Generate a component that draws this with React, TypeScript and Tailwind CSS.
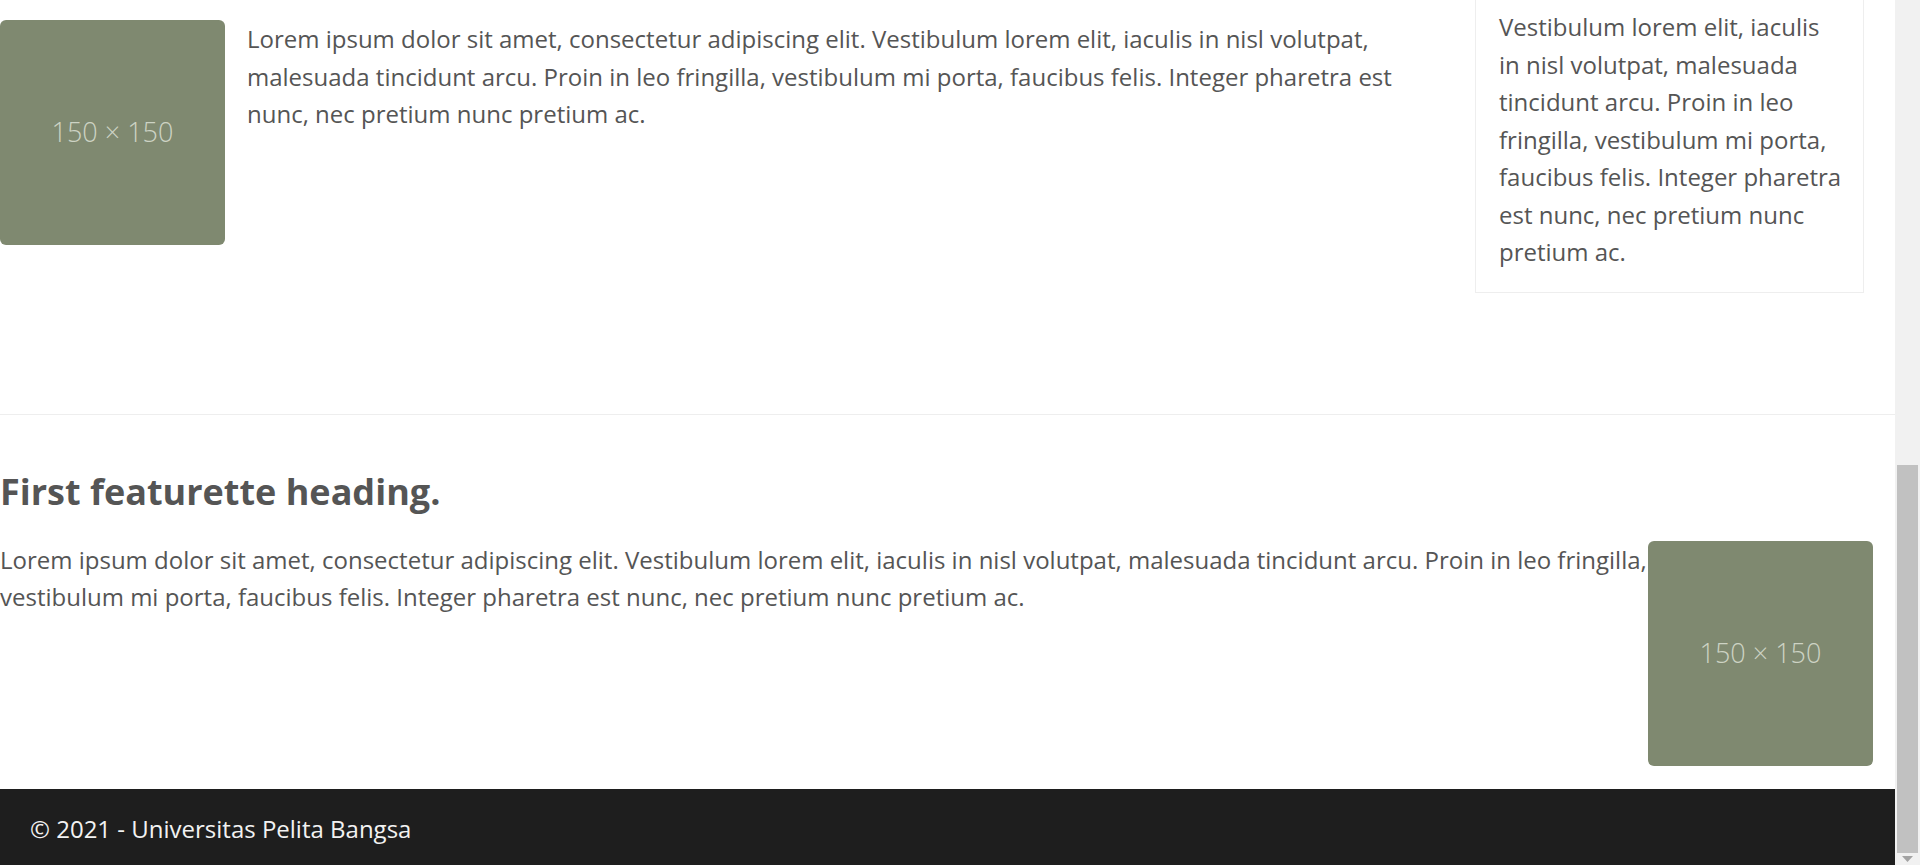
import React from "react";

const LOREM =
  "Lorem ipsum dolor sit amet, consectetur adipiscing elit. Vestibulum lorem elit, iaculis in nisl volutpat, malesuada tincidunt arcu. Proin in leo fringilla, vestibulum mi porta, faucibus felis. Integer pharetra est nunc, nec pretium nunc pretium ac.";

function Placeholder({ className = "" }: { className?: string }) {
  return (
    <div
      className={`w-[225px] h-[225px] shrink-0 rounded-[6px] bg-[#7f8970] flex items-center justify-center ${className}`}
    >
      <span className="text-[27px] font-light text-[#cdd3c4]">150 × 150</span>
    </div>
  );
}

function Scrollbar() {
  return (
    <div className="w-[25px] shrink-0 h-full bg-[#f1f1f1] flex flex-col items-center">
      <div className="flex-1" />
      <div className="w-[21px] h-[388px] bg-[#c1c1c1]" />
      <div className="h-[12px] w-full flex items-center justify-center">
        <svg width="11" height="6" viewBox="0 0 11 6">
          <path d="M0 0 L11 0 L5.5 6 Z" fill="#a3a3a3" />
        </svg>
      </div>
    </div>
  );
}

export default function App() {
  return (
    <div className="h-[865px] w-[1920px] flex overflow-hidden bg-white font-['Open_Sans',sans-serif] text-[#555]">
      <div className="flex-1 flex flex-col">
        {/* media row */}
        <div className="flex items-start pb-[121px] border-b border-[#eee]">
          <Placeholder className="mt-[20px]" />
          <p className="ml-[22px] mt-[20px] w-[1170px] text-[24px] leading-[37.5px]">{LOREM}</p>
          <div className="ml-auto mr-[31px] w-[389px] border-x border-b border-[#eee] pl-[23px] pr-[20px] pt-[8px] pb-[21px]">
            <p className="text-[24px] leading-[37.5px]">
              Vestibulum lorem elit, iaculis in nisl volutpat, malesuada tincidunt arcu. Proin in leo
              fringilla, vestibulum mi porta, faucibus felis. Integer pharetra est nunc, nec pretium
              nunc pretium ac.
            </p>
          </div>
        </div>

        {/* featurette */}
        <div className="pt-[56px] flex-1">
          <h2 className="text-[36px] font-bold leading-[42px] mb-[28px]">First featurette heading.</h2>
          <div className="flex items-start">
            <p className="flex-1 text-[24px] leading-[37.5px]">{LOREM}</p>
            <Placeholder className="mr-[22px]" />
          </div>
        </div>

        <footer className="h-[76px] shrink-0 bg-[#1e1e1e] flex items-center px-[30px] pt-[3px]">
          <span className="text-[24px] text-[#f2f2f2]">© 2021 - Universitas Pelita Bangsa</span>
        </footer>
      </div>
      <Scrollbar />
    </div>
  );
}
